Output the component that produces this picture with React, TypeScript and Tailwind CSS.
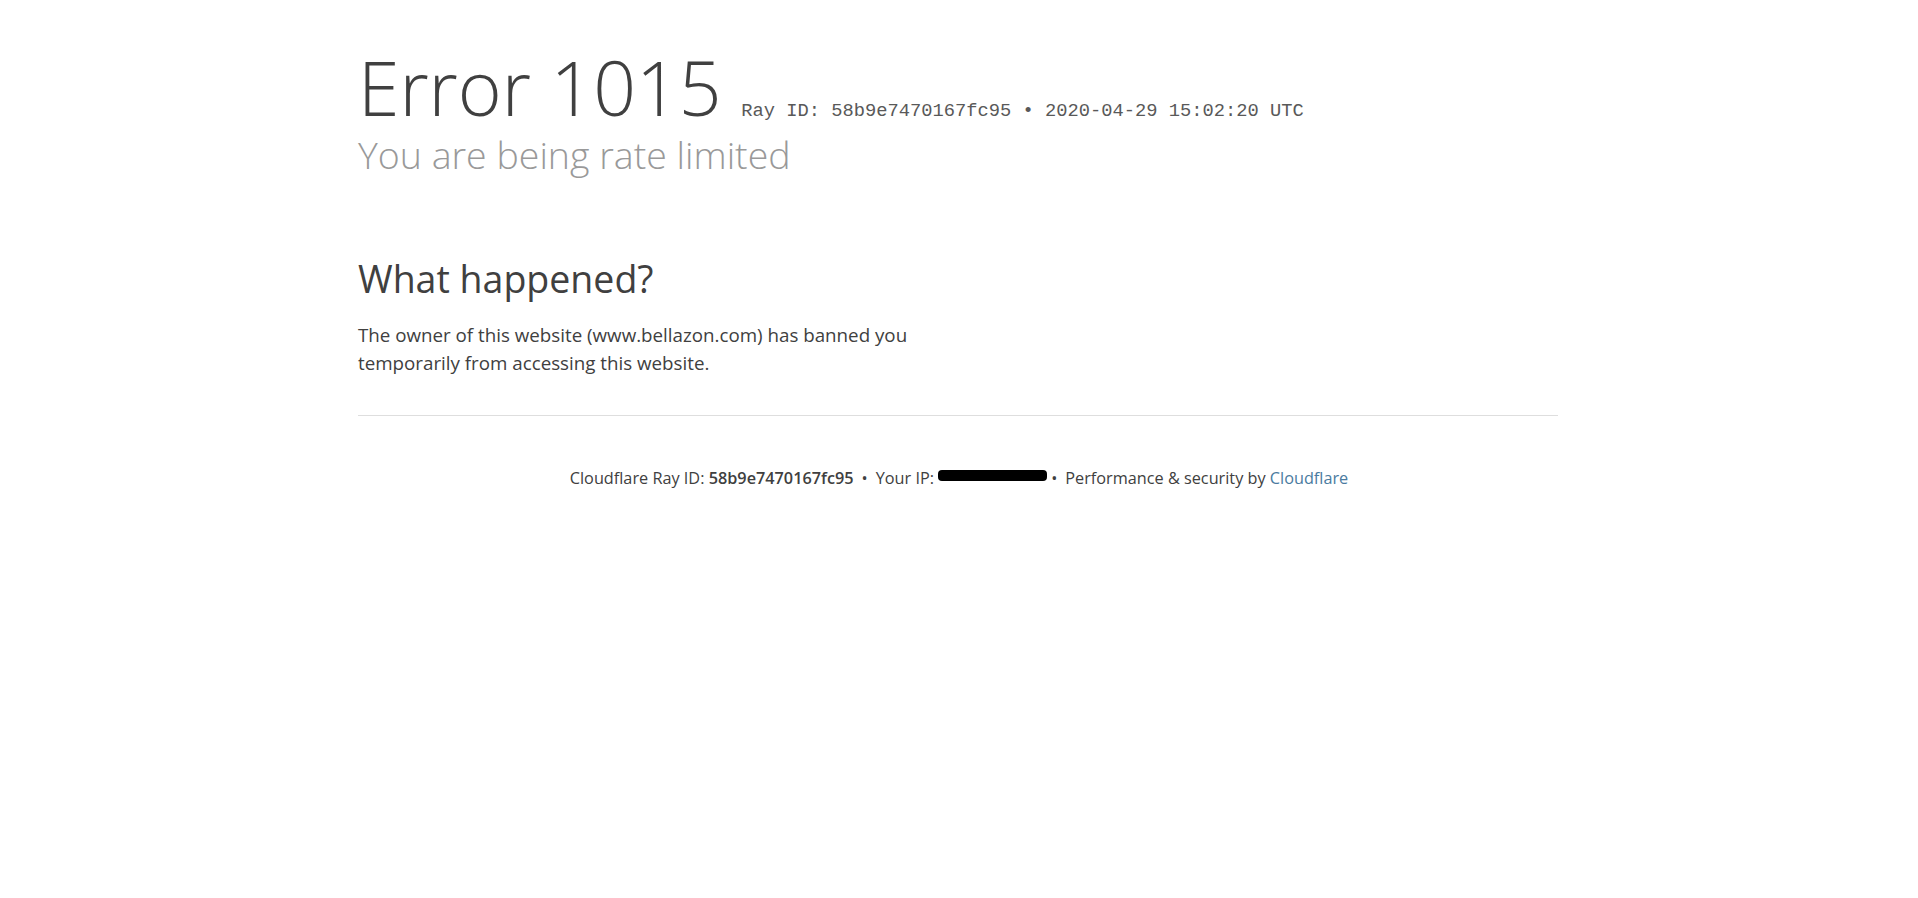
export default function App() {
  return (
    <div className="min-h-[898px] bg-white font-['Open_Sans',sans-serif] text-[#404040]">
      <div className="ml-[358px] w-[1200px]">
        <header className="pt-[47px]">
          <h1 className="text-[75px] font-light leading-[80px] whitespace-nowrap">
            Error 1015{' '}
            <small className="font-['Liberation_Mono','Courier_New',monospace] text-[18.75px] font-normal leading-none text-[#595959]">
              Ray ID: 58b9e7470167fc95 &bull; 2020-04-29 15:02:20 UTC
            </small>
          </h1>
          <h2 className="mt-[8px] text-[37.5px] font-light leading-[40px] text-[#999999]">
            You are being rate limited
          </h2>
        </header>

        <section className="mt-[84px]">
          <h2 className="text-[37.5px] font-normal leading-[40px]">What happened?</h2>
          <p className="mt-[22px] w-[600px] text-[18.75px] leading-[28px]">
            The owner of this website (www.bellazon.com) has banned you temporarily from accessing this website.
          </p>
        </section>

        <div className="mt-[38px] border-t border-[#dedede]" />

        <footer className="mt-[50px] pl-[2px] text-center text-[16.25px] leading-[24px] text-[#404040]">
          <span>Cloudflare Ray ID: </span>
          <strong className="font-semibold">58b9e7470167fc95</strong>
          <span className="mx-[8px]">&bull;</span>
          <span>Your IP: </span>
          <span className="inline-block h-[11px] w-[109px] rounded-[4px] bg-black align-[3px]" />
          <span className="ml-[4px] mr-[8px]">&bull;</span>
          <span>Performance &amp; security by </span>
          <a href="#" className="text-[#4a7ba0]">
            Cloudflare
          </a>
        </footer>
      </div>
    </div>
  )
}
